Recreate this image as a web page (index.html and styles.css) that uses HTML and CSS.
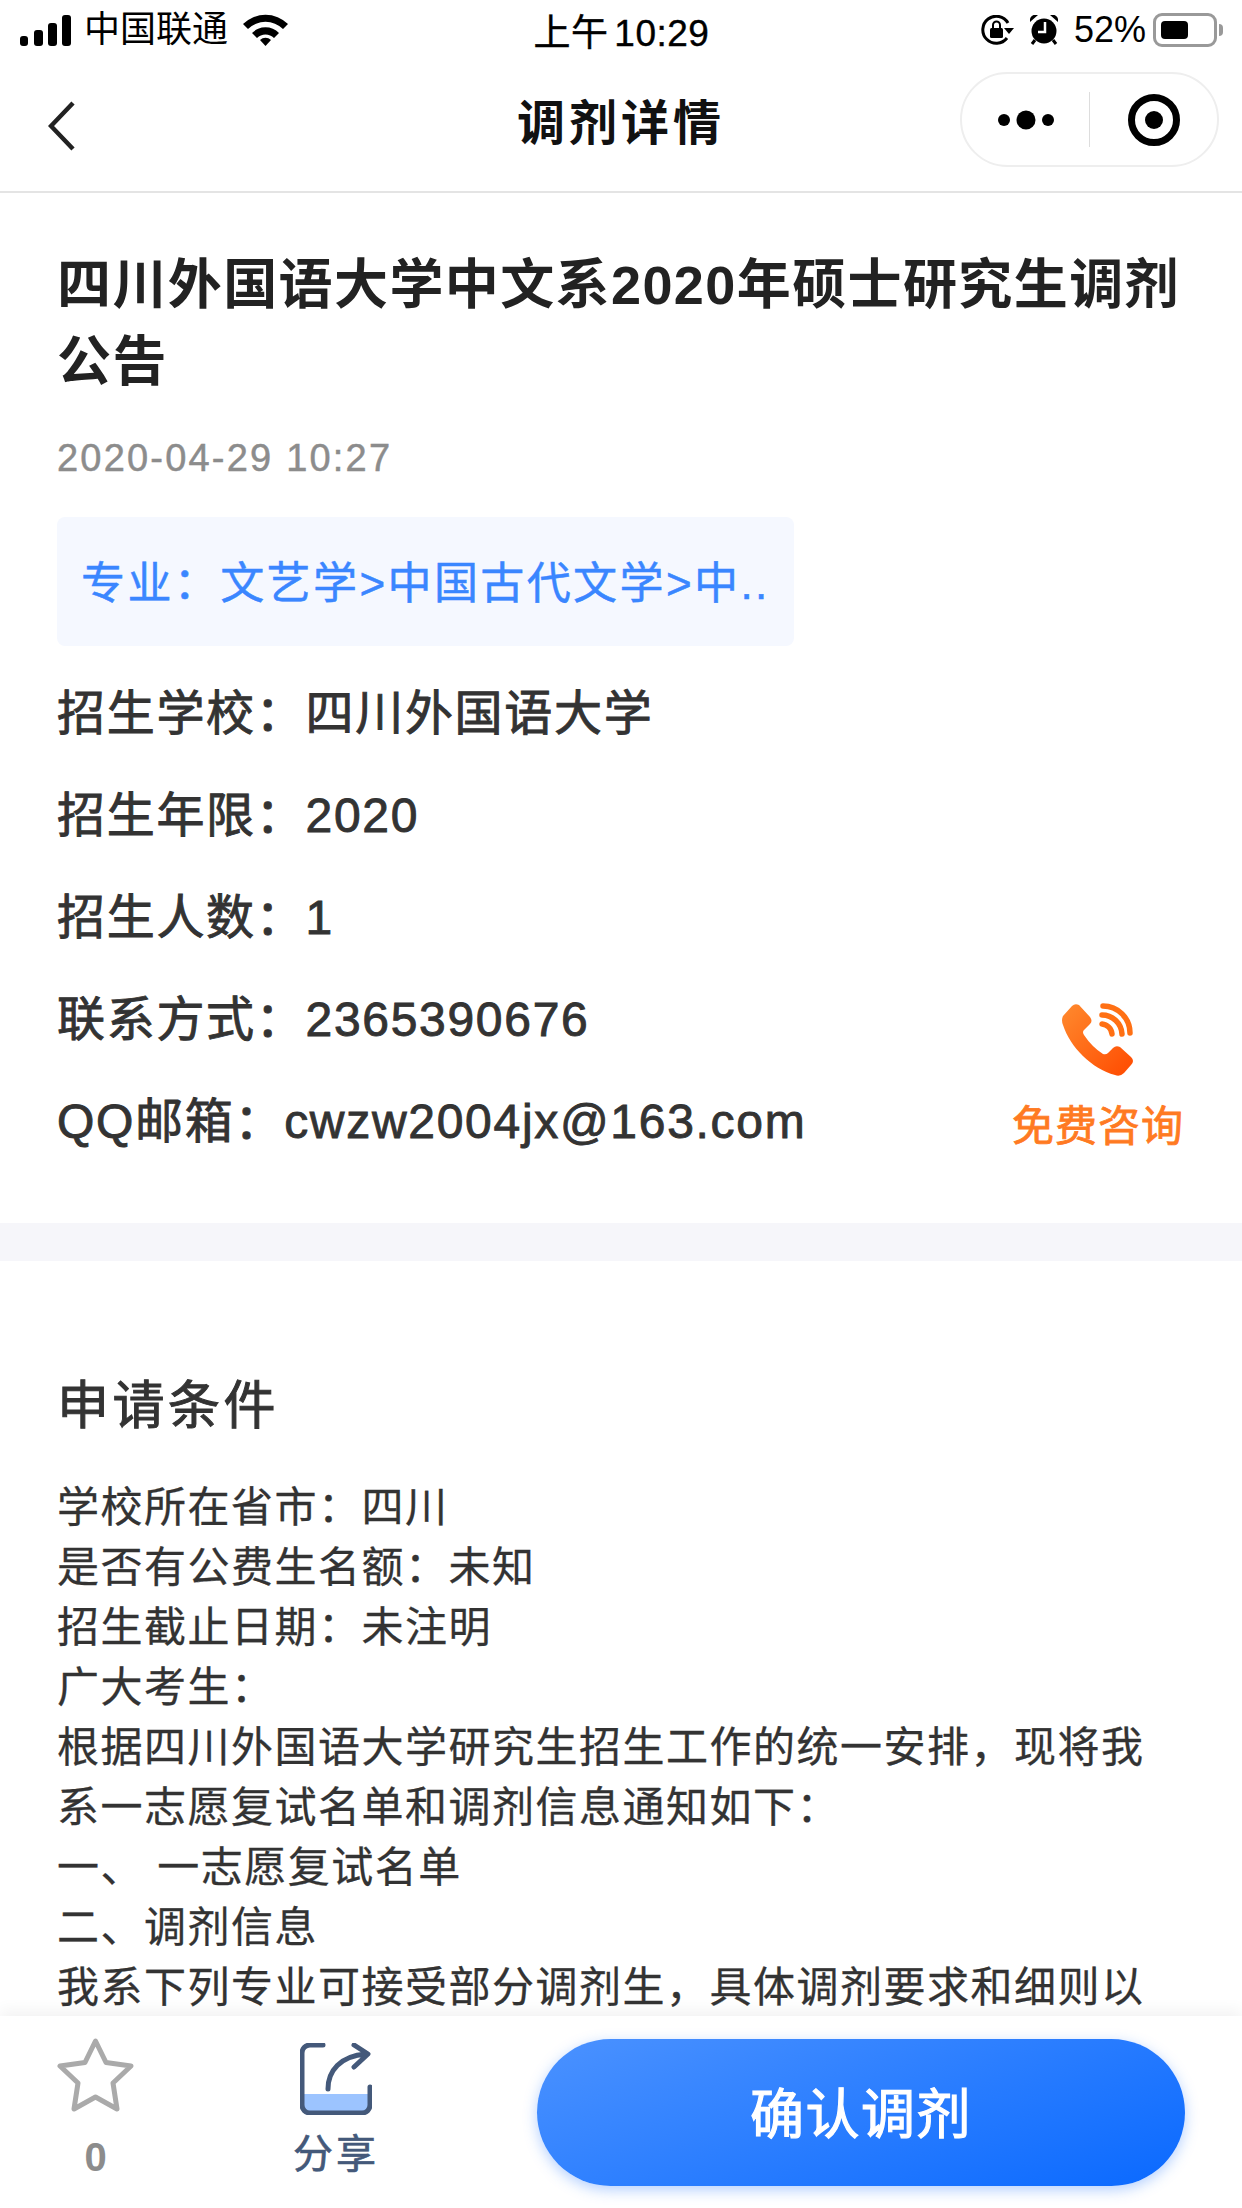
FILE: index.html
```html
<!DOCTYPE html>
<html>
<head>
  <title>调剂详情</title>
  <link rel="stylesheet" href="styles.css">
</head>
<body>
  <div class="page">
    <div class="status-bar">
      <div class="status-left">
        <svg class="signal" width="51" height="31" viewBox="0 0 51 31">
          <rect x="0" y="21" width="8" height="10" rx="3"/>
          <rect x="14" y="15" width="9" height="16" rx="3"/>
          <rect x="28" y="8" width="9" height="23" rx="3"/>
          <rect x="42" y="0" width="9" height="31" rx="3"/>
        </svg>
        <span class="carrier">中国联通</span>
        <svg class="wifi" width="45" height="32" viewBox="0 0 45 32">
          <path d="M0 10 A32 32 0 0 1 45 10 L40 15 A25 25 0 0 0 5 15Z"/>
          <path d="M9 19 A19 19 0 0 1 36 19 L31 24 A12 12 0 0 0 14 24Z"/>
          <path d="M17 26 A8 8 0 0 1 28 26 L22.500 32Z"/>
        </svg>
      </div>
      <div class="status-time">上午 10:29</div>
      <div class="status-right">
        <svg class="lock" width="34" height="30" viewBox="0 0 34 30">
          <path d="M28 8 A13.500 13.500 0 1 0 27 23" fill="none" stroke="#000" stroke-width="3"/>
          <path d="M24 13 L34 13 L29 19Z"/>
          <rect x="10" y="13" width="13" height="10" rx="1.500"/>
          <path d="M13 13 V10 A3.500 3.500 0 0 1 20 10 V13" fill="none" stroke="#000" stroke-width="2"/>
        </svg>
        <svg class="alarm" width="28" height="30" viewBox="0 0 28 30">
          <circle cx="14" cy="16" r="12.500"/>
          <path d="M0 7 A6 6 0 0 1 8 0Z M28 7 A6 6 0 0 0 20 0Z"/>
          <path d="M5 25 L2 29 M23 25 L26 29" stroke="#000" stroke-width="3"/>
          <path d="M15 7 V17 H8" fill="none" stroke="#fff" stroke-width="2.500"/>
        </svg>
        <span class="battery-text">52%</span>
        <div class="battery"><div class="battery-fill"></div></div>
        <div class="battery-nub"></div>
      </div>
    </div>

    <div class="nav-bar">
      <svg class="back" width="27" height="50" viewBox="0 0 27 50">
        <path d="M25 2 L3 25 L25 48" fill="none" stroke="#222" stroke-width="4.500"/>
      </svg>
      <div class="nav-title">调剂详情</div>
      <div class="capsule">
        <div class="capsule-half">
          <svg width="60" height="20" viewBox="0 0 60 20">
            <circle cx="8" cy="10" r="6"/>
            <circle cx="30" cy="10" r="9.500"/>
            <circle cx="52" cy="10" r="6"/>
          </svg>
        </div>
        <div class="capsule-line"></div>
        <div class="capsule-half">
          <svg width="54" height="54" viewBox="0 0 54 54">
            <circle cx="27" cy="27" r="22.500" fill="none" stroke="#000" stroke-width="7"/>
            <circle cx="27" cy="27" r="9"/>
          </svg>
        </div>
      </div>
    </div>

    <div class="info">
      <h1 class="title">四川外国语大学中文系2020年硕士研究生调剂公告</h1>
      <div class="date">2020-04-29 10:27</div>
      <div class="major-tag">专业：文艺学&gt;中国古代文学&gt;中..</div>
      <div class="info-row">招生学校：四川外国语大学</div>
      <div class="info-row">招生年限：2020</div>
      <div class="info-row">招生人数：1</div>
      <div class="info-row">联系方式：2365390676</div>
      <div class="info-row">QQ邮箱：cwzw2004jx@163.com</div>

      <div class="consult">
        <svg width="72" height="74" viewBox="0 0 72 74">
          <defs>
            <linearGradient id="phoneGrad" x1="0" y1="0" x2="1" y2="1">
              <stop offset="0" stop-color="#ff8a2e"/>
              <stop offset="1" stop-color="#ff4a00"/>
            </linearGradient>
          </defs>
          <path fill="url(#phoneGrad)" d="M1 13 L10 3 Q13 0 17 2 L28 14 Q31 18 28 21 L22 27 Q20 29 22 32 Q30 44 41 51 Q44 52 46 50 L51 45 Q54 42 58 44 L69 54 Q73 58 69 62 L62 70 Q58 74 53 72 C30 66 8 44 1 22 Q-1 17 1 13Z"/>
          <path d="M41 3 A27 27 0 0 1 68 30 M40 12 A20 20 0 0 1 60 31 M40 21 A11 11 0 0 1 50 31" fill="none" stroke="#ff7014" stroke-width="5.500" stroke-linecap="round"/>
        </svg>
        <span class="consult-text">免费咨询</span>
      </div>
    </div>

    <div class="band"></div>

    <div class="detail">
      <h2 class="detail-title">申请条件</h2>
      <div class="detail-text">
        学校所在省市：四川<br>
        是否有公费生名额：未知<br>
        招生截止日期：未注明<br>
        广大考生：<br>
        根据四川外国语大学研究生招生工作的统一安排，现将我系一志愿复试名单和调剂信息通知如下：<br>
        一、 一志愿复试名单<br>
        二、调剂信息<br>
        我系下列专业可接受部分调剂生，具体调剂要求和细则以
      </div>
    </div>

    <div class="bottom-bar">
      <div class="bar-item star-item">
        <svg width="77" height="75" viewBox="0 0 77 75">
          <path d="M38.500 3 L49 24.500 L74 28 L56 45 L60 71 L38.500 59 L17 71 L21 45 L3 28 L28 24.500Z" fill="none" stroke="#aaa" stroke-width="5" stroke-linejoin="round"/>
        </svg>
        <span class="star-count">0</span>
      </div>
      <div class="bar-item share-item">
        <svg width="72" height="72" viewBox="0 0 72 72">
          <path d="M2 51 H70 V62 A8 8 0 0 1 62 70 H10 A8 8 0 0 1 2 62Z" fill="#9cc4ff"/>
          <path d="M23 2 H10 A8 8 0 0 0 2 10 V62 A8 8 0 0 0 10 70 H62 A8 8 0 0 0 70 62 V44" fill="none" stroke="#44597a" stroke-width="5" stroke-linecap="round"/>
          <path d="M28 46 C28 28 40 13 66 11 M54 2 L68 11 L54 24" fill="none" stroke="#44597a" stroke-width="5" stroke-linecap="round" stroke-linejoin="round"/>
        </svg>
        <span class="share-text">分享</span>
      </div>
      <button class="confirm">确认调剂</button>
    </div>
  </div>
</body>
</html>
```
FILE: styles.css
```css
* {
  box-sizing: border-box;
}

body {
  margin: 0;
  background: #fff;
  font-family: "Liberation Sans", "Noto Sans CJK SC", sans-serif;
  color: #333;
}

.page {
  position: relative;
  width: 1242px;
  height: 2208px;
  overflow: hidden;
  background: #fff;
}

/* status bar */
.status-bar {
  height: 60px;
  display: grid;
  grid-template-columns: 1fr auto 1fr;
  align-items: center;
  padding: 0 19px 0 20px;
  color: #000;
}

.status-left {
  display: flex;
  align-items: center;
}

.carrier {
  font-size: 36px;
  margin-left: 13px;
  line-height: 60px;
}

.wifi {
  margin-left: 15px;
}

.status-time {
  font-size: 37px;
  letter-spacing: 0.500px;
  word-spacing: -5px;
  -webkit-text-stroke: 0.400px #000;
}

.status-right {
  display: flex;
  align-items: center;
  justify-content: flex-end;
}

.alarm {
  margin-left: 16px;
}

.battery-text {
  font-size: 36px;
  margin-left: 16px;
}

.battery {
  width: 64px;
  height: 34px;
  margin-left: 7px;
  padding: 5px;
  border: 3px solid #999;
  border-radius: 9px;
}

.battery-fill {
  width: 27px;
  height: 100%;
  background: #000;
  border-radius: 4px;
}

.battery-nub {
  width: 4px;
  height: 12px;
  margin-left: 2px;
  background: #999;
  border-radius: 0 4px 4px 0;
}

/* nav */
.nav-bar {
  height: 133px;
  padding-bottom: 14px;
  display: flex;
  align-items: center;
  justify-content: center;
  position: relative;
  border-bottom: 2px solid #e4e4e4;
}

.back {
  position: absolute;
  left: 48px;
  top: 41px;
}

.nav-title {
  font-size: 48px;
  font-weight: 700;
  letter-spacing: 4px;
  color: #111;
}

.capsule {
  position: absolute;
  right: 23px;
  top: 12px;
  width: 259px;
  height: 95px;
  display: flex;
  align-items: center;
  border: 2px solid #eee;
  border-radius: 48px;
  background: #fff;
}

.capsule-half {
  flex: 1;
  display: flex;
  align-items: center;
  justify-content: center;
}

.capsule-line {
  width: 1px;
  height: 55px;
  background: #ddd;
}

/* info block */
.info {
  position: relative;
  padding: 54px 57px 50px;
}

.title {
  margin: 0;
  font-size: 54px;
  line-height: 77px;
  font-weight: 700;
  letter-spacing: 1.400px;
  color: #222;
}

.date {
  margin-top: 32px;
  font-size: 38px;
  line-height: 50px;
  letter-spacing: 2.200px;
  color: #8c8c8c;
  -webkit-text-stroke: 0.500px #8c8c8c;
}

.major-tag {
  width: 737px;
  height: 129px;
  margin-top: 34px;
  margin-bottom: 17px;
  padding-left: 24px;
  line-height: 133px;
  font-size: 44px;
  letter-spacing: 2.400px;
  white-space: nowrap;
  color: #3a86ff;
  background: #f5f8ff;
  border-radius: 8px;
  -webkit-text-stroke: 0.500px #3a86ff;
}

.info-row {
  height: 102px;
  line-height: 102px;
  font-size: 48px;
  letter-spacing: 1.700px;
  color: #333;
  -webkit-text-stroke: 0.900px #333;
}

.consult {
  position: absolute;
  right: 58px;
  top: 810px;
  width: 172px;
  display: flex;
  flex-direction: column;
  align-items: center;
}

.consult-text {
  margin-top: 27px;
  font-size: 42px;
  line-height: 46px;
  letter-spacing: 1px;
  white-space: nowrap;
  color: #ff7a22;
  -webkit-text-stroke: 0.800px #ff7a22;
}

.band {
  height: 38px;
  background: #f6f6fa;
}

/* detail block */
.detail {
  padding: 110px 57px 0;
}

.detail-title {
  margin: 0 0 37px;
  font-size: 52px;
  line-height: 70px;
  font-weight: 400;
  letter-spacing: 3.500px;
  color: #333;
  -webkit-text-stroke: 1px #333;
}

.detail-text {
  width: 1110px;
  font-size: 42px;
  line-height: 60px;
  letter-spacing: 1.500px;
  color: #333;
  -webkit-text-stroke: 0.300px #333;
}

/* bottom bar */
.bottom-bar {
  position: absolute;
  left: 0;
  right: 0;
  bottom: 0;
  height: 192px;
  background: #fff;
  box-shadow: 0 -6px 14px rgba(0, 0, 0, 0.05);
}

.bar-item {
  position: absolute;
  display: flex;
  flex-direction: column;
  align-items: center;
}

.star-item {
  left: 57px;
  top: 22px;
  width: 77px;
}

.star-count {
  margin-top: 21px;
  font-size: 40px;
  line-height: 46px;
  font-weight: 700;
  color: #8c8c8c;
}

.share-item {
  left: 294px;
  top: 27px;
  width: 84px;
}

.share-text {
  margin-top: 14px;
  font-size: 40px;
  line-height: 50px;
  letter-spacing: 3px;
  white-space: nowrap;
  color: #44597a;
  -webkit-text-stroke: 0.700px #44597a;
}

.confirm {
  position: absolute;
  left: 537px;
  top: 23px;
  width: 648px;
  height: 147px;
  padding: 0 0 4px;
  border: none;
  border-radius: 74px;
  font-family: inherit;
  font-size: 54px;
  letter-spacing: 1.500px;
  color: #fff;
  background: linear-gradient(160deg, #4b92ff 0%, #0a69ff 100%);
  box-shadow: 0 4px 14px rgba(40, 120, 255, 0.35);
  -webkit-text-stroke: 1.200px #fff;
}
```
